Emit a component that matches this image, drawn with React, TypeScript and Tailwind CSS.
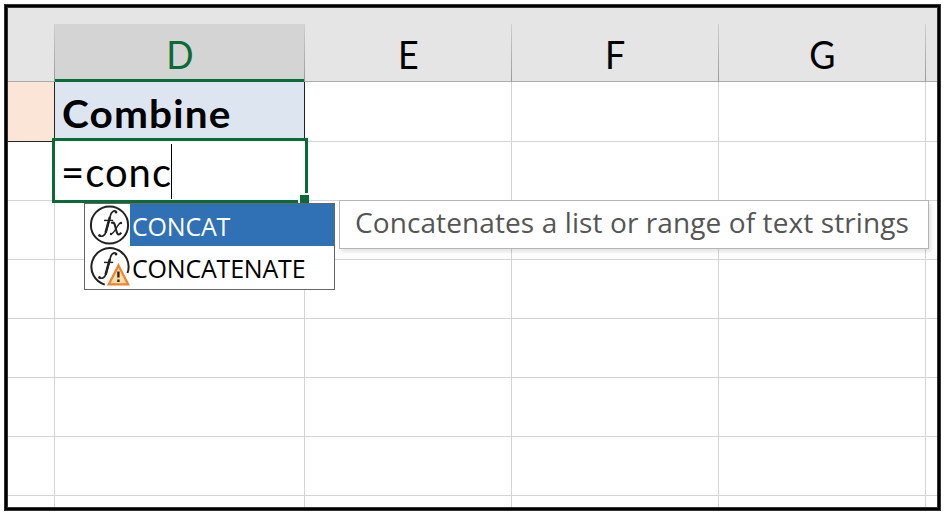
import { clsx } from "clsx";

const columns = [
  { name: "", width: "w-[47px]" },
  { name: "D", width: "w-[250px]" },
  { name: "E", width: "w-[207px]" },
  { name: "F", width: "w-[207px]" },
  { name: "G", width: "w-[207px]" },
  { name: "", width: "w-[11px]" },
];

function FunctionIcon({ warning = false }: { warning?: boolean }) {
  return (
    <svg viewBox="0 0 42 42" className="h-[42px] w-[42px] shrink-0">
      {warning ? (
        <path d="M15.8 38.6A18.6 18.6 0 1 1 38.5 27" fill="none" stroke="#222" strokeWidth="2" />
      ) : (
        <circle cx="20.5" cy="21" r="18.6" fill="white" stroke="#222" strokeWidth="2" />
      )}
      <path
        d="M27.4 7.6C25.2 6 22.4 7.4 21.4 11.5L16.9 28C16 31.5 13 33.1 10.2 31.8"
        fill="none" stroke="#222" strokeWidth="1.7" strokeLinecap="round"
      />
      <path d="M20.9 13 16.6 28.6" stroke="#222" strokeWidth="2.5" />
      <path d="M15 16.4h9.2" stroke="#222" strokeWidth="1.4" />
      <circle cx="27" cy="8.3" r="1.2" fill="#222" />
      <circle cx="10.5" cy="31.2" r="1.2" fill="#222" />
      {warning ? (
        <>
          <path d="M29.5 19.5 39.2 38.4H19.7Z" fill="#fbdca4" stroke="#ee8430" strokeWidth="2.2" />
          <path d="M29.4 25.5v6M29.4 33.4v2.6" stroke="#222" strokeWidth="2.3" />
        </>
      ) : (
        <>
          <path d="M22.2 19.2C25.8 16.8 26 22 27.3 26.5 28.4 31.3 30.2 31.5 32.2 28.6" fill="none" stroke="#222" strokeWidth="2.1" />
          <path d="M32.3 18.8C28.7 18 26.8 28.8 21.7 30.4" fill="none" stroke="#222" strokeWidth="1.3" />
          <circle cx="32" cy="19" r="1.2" fill="#222" />
          <circle cx="22" cy="30" r="1.2" fill="#222" />
        </>
      )}
    </svg>
  );
}

function GridRow({ height }: { height: string }) {
  return (
    <div className={clsx("flex", height)}>
      {columns.map((column, i) => (
        <div
          key={i}
          className={clsx(
            "shrink-0 border-b border-[#d4d4d4]",
            column.width,
            i < 5 && "border-r",
          )}
        />
      ))}
    </div>
  );
}

export default function App() {
  return (
    <div className="relative h-[515px] w-[945px] overflow-hidden bg-white p-1 font-['Lato',sans-serif] text-black">
      <div className="h-[507px] w-[937px] border border-[#333] bg-black p-[2px]">
        <div className="h-[501px] w-[931px] overflow-hidden border border-[#333] bg-white">
          <div className="flex h-[74px] items-end bg-[#e5e5e5]">
            {columns.map((column, i) => (
              <div
                key={i}
                className={clsx("flex h-[58px] shrink-0", column.width, i === 1 && "bg-[#d4d4d4]")}
              >
                <div
                  className={clsx(
                    "flex flex-1 justify-center border-b pt-[5px] text-[39px] leading-[50px]",
                    i === 1 ? "border-b-[3px] border-[#0b6b37] text-[#0b6b37]" : "border-[#ababab]",
                  )}
                >
                  <span className="inline-block scale-x-[.92]">{column.name}</span>
                </div>
                {i < 5 && <div className="w-px bg-linear-to-b from-[#cfcfcf] to-[#999]" />}
              </div>
            ))}
          </div>
          <div className="flex h-[60px]">
            <div className="w-[47px] border-r border-b border-[#222] bg-[#fbe5d6]" />
            <div className="w-[250px] border-r border-[#222] bg-[#dde6f0] pl-[7px] text-[39px] leading-[62px] font-bold">
              <span className="inline-block origin-left scale-x-[1.04] tracking-[1.1px]">Combine</span>
            </div>
            {columns.slice(2).map((column, i) => (
              <div key={i} className={clsx("border-b border-[#d4d4d4]", column.width, i < 3 && "border-r")} />
            ))}
          </div>
          <GridRow height="h-[59px]" />
          <GridRow height="h-[59px]" />
          <GridRow height="h-[59px]" />
          <GridRow height="h-[59px]" />
          <GridRow height="h-[59px]" />
          <GridRow height="h-[59px]" />
          <div className="flex h-[11px]">
            {columns.map((column, i) => (
              <div key={i} className={clsx("shrink-0 border-[#d4d4d4]", column.width, i < 5 && "border-r")} />
            ))}
          </div>
        </div>
      </div>

      <div className="absolute top-[138px] left-[52px] flex h-[65px] w-[256px] items-start border-[3px] border-[#0b6b37] bg-white pt-[3px] pl-[6px]">
        <span className="w-[110px] text-[40px] leading-[56px] tracking-[1px] whitespace-nowrap">=conc</span>
        <div className="h-[55px] w-px bg-black" />
        <div className="absolute -right-1 -bottom-[3px] h-[10px] w-[11px] border-t-2 border-l-2 border-white bg-[#0b6b37]" />
      </div>

      <div className="absolute top-[203px] left-[84px] h-[87px] w-[251px] border border-[#666] bg-white font-['Open_Sans',sans-serif] text-[25px] leading-[44px]">
        <div className="flex h-[42px] pl-[4px]">
          <FunctionIcon />
          <div className="-ml-px flex-1 bg-[#3070b4] pl-[2px] text-white">
            <span className="tracking-[-0.2px]">CONCAT</span>
          </div>
        </div>
        <div className="flex h-[42px] pl-[4px]">
          <FunctionIcon warning />
          <div className="-ml-px flex-1 pl-[2px]">
            <span className="tracking-[-0.2px]">CONCATENATE</span>
          </div>
        </div>
      </div>

      <div className="absolute top-[200px] left-[339px] h-[49px] w-[590px] border border-[#b5b5b5] bg-white pl-[15px] font-['Open_Sans',sans-serif] text-[28px] leading-[42px] whitespace-nowrap text-[#555] shadow-[2px_3px_4px_#0000001c]">
        <span className="tracking-[0.1px]">Concatenates a list or range of text strings</span>
      </div>
    </div>
  );
}
